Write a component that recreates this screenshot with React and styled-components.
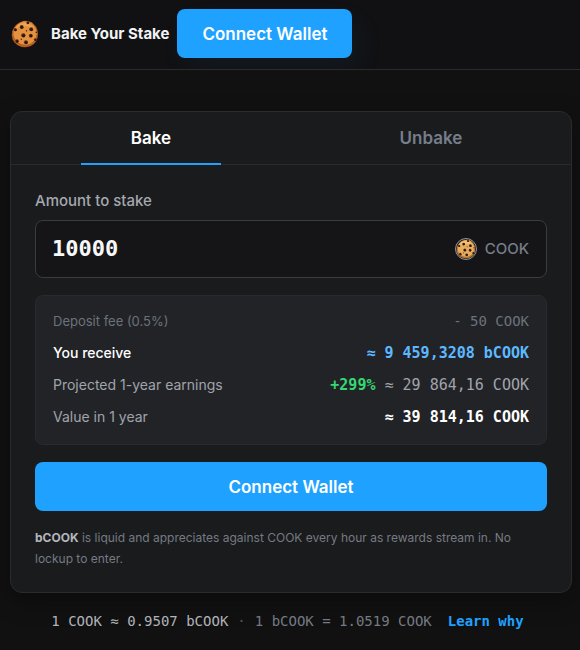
import React, { useState } from "react";
import styled, { createGlobalStyle } from "styled-components";

const GlobalStyle = createGlobalStyle`
  * {
    box-sizing: border-box;
  }
  body {
    margin: 0;
    background: #111111;
    color: #ffffff;
    font-family: Inter, "Liberation Sans", sans-serif;
  }
  button,
  input {
    font-family: inherit;
  }
`;

const mono = `"DejaVu Sans Mono", "Liberation Mono", monospace`;

const Header = styled.header`
  display: flex;
  align-items: center;
  gap: 8px;
  height: 70px;
  padding: 0 11px 2px;
  overflow: hidden;
  background: #111113;
  border-bottom: 1px solid #2b2c2e;
`;
const Brand = styled.a`
  display: flex;
  align-items: center;
  gap: 12px;
  color: #f2f3f5;
  font-size: 15px;
  font-weight: 700;
  text-decoration: none;
  white-space: nowrap;
`;
const PrimaryButton = styled.button`
  width: ${(props) => (props.$full ? "100%" : "auto")};
  height: 49px;
  padding: 0 25px;
  border: 0;
  border-radius: 8px;
  background: #1fa2ff;
  box-shadow: ${(props) =>
    props.$glow ? "8px 12px 28px rgba(31, 162, 255, 0.06)" : "none"};
  color: #ffffff;
  font-size: 17px;
  font-weight: 600;
  white-space: nowrap;
  cursor: pointer;
`;

const Main = styled.main`
  padding: 41px 8px 20px 10px;
`;
const Card = styled.section`
  border: 1px solid #2a2b2e;
  border-radius: 12px;
  background: #1a1b1d;
  box-shadow: 0 8px 24px rgba(0, 0, 0, 0.35);
`;
const Tabs = styled.div`
  display: flex;
  border-bottom: 1px solid #2a2b2e;
`;
const Tab = styled.button`
  position: relative;
  flex: 1;
  height: 52px;
  padding: 0;
  border: 0;
  background: none;
  color: ${(props) => (props.$active ? "#ffffff" : "#757e8a")};
  font-size: 17px;
  font-weight: 600;
  cursor: pointer;

  &::after {
    content: "";
    display: ${(props) => (props.$active ? "block" : "none")};
    position: absolute;
    right: 25%;
    bottom: -1px;
    left: 25%;
    height: 2px;
    background: #1fa2ff;
  }
`;
const Panel = styled.div`
  display: flex;
  flex-direction: column;
  padding: 24px 24px 23px;
`;
const Label = styled.label`
  margin-bottom: 8px;
  color: #a5a9b0;
  font-size: 15px;
  font-weight: 500;
  line-height: 23px;
`;
const AmountBox = styled.div`
  display: flex;
  align-items: center;
  height: 58px;
  margin-bottom: 17px;
  padding: 0 17px 1px 16px;
  border: 1px solid #3b3c3f;
  border-radius: 8px;
  background: #151517;
`;
const AmountInput = styled.input`
  flex: 1;
  min-width: 0;
  padding: 0;
  border: 0;
  outline: 0;
  background: none;
  color: #f8f8f8;
  font-family: ${mono};
  font-size: 22px;
  font-weight: 700;
`;
const Token = styled.span`
  display: flex;
  align-items: center;
  gap: 8px;
  color: #757e8a;
  font-size: 15px;
  font-weight: 500;
`;

const Summary = styled.dl`
  margin: 0 0 17px;
  padding: 9px 17px 11px;
  border: 1px solid #292a2d;
  border-radius: 8px;
  background: #222327;
`;
const Row = styled.div`
  display: flex;
  justify-content: space-between;
  color: ${(props) => props.$color};
  font-size: ${(props) => (props.$small ? 13 : 14)}px;
  font-weight: ${(props) => (props.$medium ? 500 : 400)};
  line-height: 32px;
  white-space: nowrap;
`;
const Value = styled.dd`
  margin: 0;
  color: ${(props) => props.$color || "inherit"};
  font-family: ${mono};
  font-size: ${(props) => (props.$small ? 14 : 15)}px;
  font-weight: ${(props) => (props.$bold ? 700 : 400)};
`;
const Gain = styled.strong`
  color: #35d872;
`;

const Note = styled.p`
  margin: 16px 0 0;
  color: #757a83;
  font-size: 12px;
  line-height: 21px;

  strong {
    color: #b4b7bd;
  }
`;

const Rate = styled.footer`
  display: flex;
  justify-content: center;
  margin-top: 17px;
  padding-right: 7px;
  color: #757a83;
  font-family: ${mono};
  font-size: 14px;
  line-height: 22px;
  white-space: nowrap;
`;
const Current = styled.span`
  color: #b0b3b9;
`;
const Dot = styled.span`
  margin: 0 9px;
  color: #50545b;
`;
const LearnLink = styled.a`
  margin-left: 16px;
  color: #1fa2ff;
  font-weight: 700;
  text-decoration: none;
`;

const chips = [
  [11.4, 7.5, 2.1],
  [18, 2.9, 1.6],
  [21.6, 10, 2.1],
  [4.6, 10.4, 1.7],
  [13.2, 16.4, 2.3],
  [21.2, 16.8, 2],
  [6.4, 22.6, 1.9],
  [16, 23.8, 2.1],
  [26, 21, 1.5],
  [11, 20.6, 0.7],
  [16.6, 11.4, 0.7],
  [27, 13, 0.8],
];

const Cookie = ({ size, ringed }) => (
  <svg width={size} height={size} viewBox="0 0 30 30" aria-hidden="true">
    {ringed && <circle cx="15" cy="15" r="14.3" fill="#1c1d20" stroke="#c3c5c8" />}
    <g transform={ringed ? "translate(1.5 1.5) scale(.9)" : undefined}>
      <path
        d="M13 1.2 16 .8l3 .7 3 .7 2.7 2.5 2.2 2.6 1.4 3.4.6 3.8-.4 4.2-1.4 3.8-2.6 3.2-3.8 2.4-4.8 1.1-4.5-.4-4.3-1.7-3.3-3L1.7 21l-.8-4.7.4-4.2L3 8.2l2.5-3L9 2.6z"
        fill={ringed ? "#b97835" : "#b5601f"}
      />
      <path
        d="m13 1.6 5-.2 4 2 3 3 2 4 .4 4-.8 4-2 4-3.8 3-4.8 1.2-4.7-.6-4.2-2.2-3-3.6-1.5-4.2.2-4.4 1.8-4 3.2-3.4z"
        fill={ringed ? "#e7ae5b" : "#e3923f"}
      />
      <path
        d="M4 10Q7 3 14 3q7 0 10 6-6-3-11-2-5 0-9 3z"
        fill={ringed ? "#f2c477" : "#efa552"}
      />
      {chips.map(([x, y, r]) => (
        <g key={`${x}-${y}`}>
          <circle cx={x} cy={y} r={r} fill="#5a2c1a" />
          <circle cx={x + 0.3} cy={y + 0.4} r={r * 0.7} fill="#2b1512" />
        </g>
      ))}
    </g>
  </svg>
);

export default () => {
  const [tab, setTab] = useState("Bake");
  const [amount, setAmount] = useState("10000");

  return (
    <>
      <GlobalStyle />
      <Header>
        <Brand href="#">
          <Cookie size={28} />
          Bake Your Stake
        </Brand>
        <PrimaryButton $glow>Connect Wallet</PrimaryButton>
      </Header>

      <Main>
        <Card>
          <Tabs role="tablist">
            {["Bake", "Unbake"].map((name) => (
              <Tab
                key={name}
                role="tab"
                aria-selected={tab === name}
                $active={tab === name}
                onClick={() => setTab(name)}
              >
                {name}
              </Tab>
            ))}
          </Tabs>
          <Panel>
            <Label htmlFor="amount">Amount to stake</Label>
            <AmountBox>
              <AmountInput
                id="amount"
                inputMode="decimal"
                value={amount}
                onChange={(e) => setAmount(e.target.value)}
              />
              <Token>
                <Cookie size={22} ringed />
                COOK
              </Token>
            </AmountBox>

            <Summary>
              <Row $color="#6c727b" $small>
                <dt>Deposit fee (0.5%)</dt>
                <Value $small>- 50 COOK</Value>
              </Row>
              <Row $color="#ffffff" $medium>
                <dt>You receive</dt>
                <Value $color="#5cb9ff" $bold>
                  ≈ 9 459,3208 bCOOK
                </Value>
              </Row>
              <Row $color="#a0a4ab">
                <dt>Projected 1-year earnings</dt>
                <Value>
                  <Gain>+299%</Gain> ≈ 29 864,16 COOK
                </Value>
              </Row>
              <Row $color="#a0a4ab">
                <dt>Value in 1 year</dt>
                <Value $color="#ffffff" $bold>
                  ≈ 39 814,16 COOK
                </Value>
              </Row>
            </Summary>

            <PrimaryButton $full>Connect Wallet</PrimaryButton>
            <Note>
              <strong>bCOOK</strong> is liquid and appreciates against COOK every
              hour as rewards stream in. No lockup to enter.
            </Note>
          </Panel>
        </Card>

        <Rate>
          <Current>1 COOK ≈ 0.9507 bCOOK</Current>
          <Dot>·</Dot>
          <span>1 bCOOK = 1.0519 COOK</span>
          <LearnLink href="#">Learn why</LearnLink>
        </Rate>
      </Main>
    </>
  );
};
